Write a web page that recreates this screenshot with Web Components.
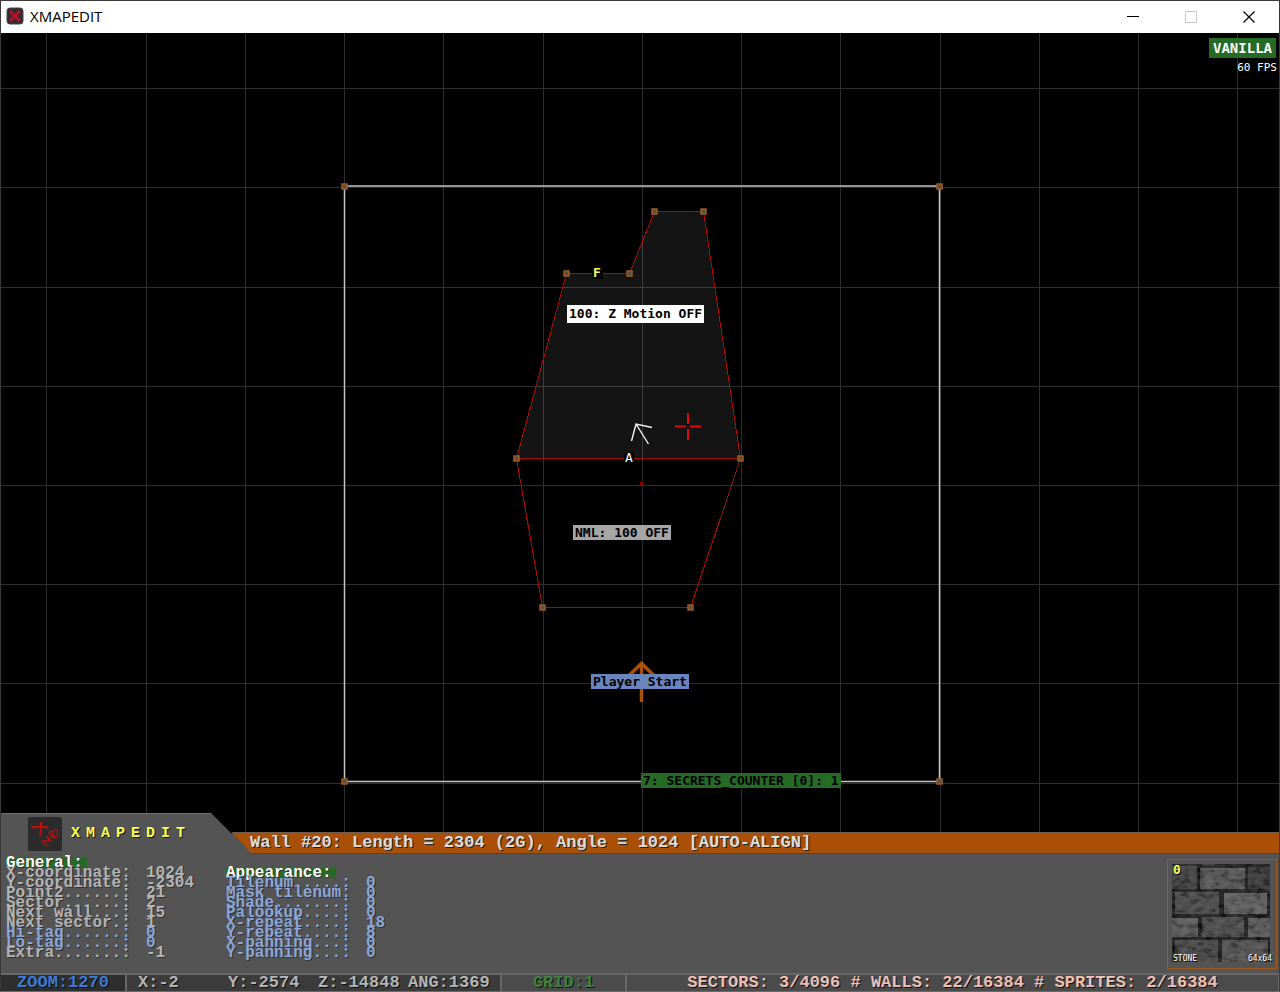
<!DOCTYPE html>
<html lang="en">
<head>
<meta charset="utf-8">
<title>XMAPEDIT</title>
<style>
html, body { margin: 0; height: 100%; background: #000; }
body { font-family: "Liberation Mono", monospace; font-size: 17px; color: #b4b4b4; }
</style>
</head>
<body>
<editor-window>
  <title-bar slot="title">XMAPEDIT</title-bar>
  <map-view slot="map">
    <map-label style="--x:567;--y:305;--bg:#fff;--h:18px">100: Z Motion OFF</map-label>
    <map-label style="--x:573;--y:525;--bg:#a6a6a6">NML: 100 OFF</map-label>
    <map-label style="--x:591;--y:674;--bg:#6a84bc">Player Start</map-label>
    <map-label style="--x:641;--y:773;--bg:#256a25">7: SECRETS_COUNTER [0]: 1</map-label>
    <map-label style="--x:591;--y:265;--bg:transparent;--fg:#fcfc54">F</map-label>
    <map-label style="--x:623;--y:450;--bg:transparent;--fg:#fff;--weight:400">A</map-label>
    <map-status slot="status" fps="60 FPS">VANILLA</map-status>
  </map-view>
  <panel-header slot="header" message="Wall #20: Length = 2304 (2G), Angle = 1024 [AUTO-ALIGN]">XMAPEDIT</panel-header>
  <property-panel slot="panel"></property-panel>
  <status-bar slot="footer">
    <status-cell tone="zoom">ZOOM:1270</status-cell>
    <status-cell tone="position"><span>X:-2</span><span>Y:-2574</span><span>Z:-14848</span><span>ANG:1369</span></status-cell>
    <status-cell tone="grid">GRID:1</status-cell>
    <status-cell tone="totals">SECTORS: 3/4096 # WALLS: 22/16384 # SPRITES: 2/16384</status-cell>
  </status-bar>
</editor-window>

<script>
const define = (name, html, setup) => {
  const template = document.createElement('template');
  template.innerHTML = html;
  customElements.define(name, class extends HTMLElement {
    constructor() {
      super();
      this.attachShadow({ mode: 'open' }).append(template.content.cloneNode(true));
    }
    connectedCallback() { if (setup) setup(this, this.shadowRoot); }
  });
};

define('editor-window', `
<style>
:host { display: flex; flex-direction: column; box-sizing: border-box; min-height: 100vh; border: 1px solid #3c3838; border-bottom-color: #6a6a6a; background: #545454; }
main { display: grid; flex: 1; min-height: 400px; }
</style>
<slot name="title"></slot>
<main><slot name="map"></slot></main>
<slot name="header"></slot>
<slot name="panel"></slot>
<slot name="footer"></slot>`);

define('title-bar', `
<style>
:host { display: flex; align-items: center; height: 32px; background: #fff; color: #000; font: 15px/20px "Open Sans", "Noto Sans", sans-serif; }
.icon { width: 18px; height: 18px; margin: 0 6px 2px 5px; }
h1 { flex: 1; margin: 0; padding-bottom: 2px; font: inherit; }
button { display: grid; place-items: center; width: 58px; height: 32px; border: 0; padding: 0; background: none; color: #000; }
button:last-child { margin-right: 1px; }
button:disabled { color: #c6c6c6; }
svg { fill: none; stroke: currentColor; }
</style>
<svg class="icon" viewBox="0 0 18 18"><rect x="1" y="1" width="16" height="16" rx="3" fill="#332c2f" stroke="#44444a"/><path d="M4 4l10 10M14 4L4 14" stroke="#b80f2b" stroke-width="3"/></svg>
<h1><slot></slot></h1>
<button aria-label="Minimize"><svg width="12" height="12"><path d="M0 5.5h12"/></svg></button>
<button aria-label="Maximize" disabled><svg width="12" height="12"><path d="M.5 .5h11v11h-11z"/></svg></button>
<button aria-label="Close"><svg width="12" height="12"><path d="M.5 .5l11 11M11.500 .5l-11 11" stroke-width="1.200"/></svg></button>`);

define('map-view', `
<style>
:host { display: block; position: relative; overflow: hidden; background: #000; }
svg { position: absolute; inset: 0; width: 100%; height: 100%; }
.status { position: absolute; top: 5px; right: 2px; }
</style>
<svg aria-hidden="true" fill="none">
  <g transform="translate(-1 -33)">
    <path id="grid" stroke="#2e2e2e"/>
    <path d="M567 273.500L629 273.500L654 211.500H703L740.500 458.500H516.500Z" fill="#fff" fill-opacity=".08"/>
    <path d="M344.500 186H939.500V781.500H344.500Z" stroke="#c4c4c4" stroke-width="1.500"/>
    <path d="M566.500 273.500H629.500L654.500 211.500H703.500L740.500 458.500L690.500 607.500H542.500L516.500 458.500L566.500 273.500M516.500 458.500H740.500" stroke="#a80a0a" stroke-width="1" shape-rendering="crispEdges"/>
    <g id="nodes" fill="#54504a" stroke="#a05a1c" stroke-width="1.500"></g>
    <path d="M592 266h11v13h-11zM624 452h10v12h-10z" fill="#000"/>
    <path d="M631.500 441L636 424L652 427.500M636 424L648.500 444" stroke="#f4f4f4" stroke-width="1.400"/>
    <path d="M675 426.500h11M690 426.500h11M688 413v11M688 429v11" stroke="#dc0808" stroke-width="2"/>
    <path d="M640 482l3 3M643 482l-3 3" stroke="#900"/>
    <path d="M641.500 702V664M629 675.500L641.500 663.500L654 675.500" stroke="#a85006" stroke-width="3.500"/>
  </g>
</svg>
<slot></slot>
<div class="status"><slot name="status"></slot></div>`, (host, root) => {
  let d = '';
  for (let i = 0; i < 40; i++) {
    d += `M${Math.round(46.4 + i * 99.25) + .5} 0V4000M0 ${Math.round(88.2 + i * 99.2) + .5}H4000`;
  }
  root.querySelector('#grid').setAttribute('d', d);
  const points = [[344, 186], [939, 186], [344, 781], [939, 781], [654, 211], [703, 211], [566, 273], [629, 273], [516, 458], [740, 458], [542, 607], [690, 607]];
  root.querySelector('#nodes').innerHTML = points.map(([x, y]) => `<rect x="${x - 2}" y="${y - 2}" width="5" height="5"/>`).join('');
});

define('map-label', `
<style>
:host { position: absolute; left: calc(var(--x) * 1px - 1px); top: calc(var(--y) * 1px - 33px); padding: 0 2px; background: var(--bg); color: var(--fg, #000); font: var(--weight, 700) 13px/15px "DejaVu Sans Mono", monospace; line-height: var(--h, 15px); white-space: nowrap; }
</style>
<slot></slot>`);

define('map-status', `
<style>
:host { display: flex; flex-direction: column; align-items: flex-end; gap: 2px; color: #fff; font-family: "DejaVu Sans Mono", monospace; }
b { padding: 0 4px; margin-right: 1px; background: #256a25; font-size: 14px; line-height: 20px; }
span { font-size: 11px; line-height: 16px; }
</style>
<b><slot></slot></b><span></span>`, (host, root) => {
  root.querySelector('span').textContent = host.getAttribute('fps');
});

define('panel-header', `
<style>
:host { display: flex; align-items: flex-end; position: relative; margin-top: -20px; }
.tab { flex: none; display: flex; align-items: center; box-sizing: border-box; width: 251px; height: 41px; padding: 1px 0 0 27px; gap: 9px;
  background: linear-gradient(#707070 1px, #545454 1px); clip-path: polygon(0 0, 210px 0, 100% 100%, 0 100%); }
.tab svg { width: 34px; height: 34px; }
h2 { margin: 0; color: #fcfc54; font-size: 15px; line-height: 20px; letter-spacing: 6px; text-shadow: 1px 1px #111; }
p { flex: 1; margin: 0 0 0 -20px; padding-left: 18px; line-height: 20px; border-top: 1px solid #705c4c; border-bottom: 1px solid #4a4642; background: #a94f06; color: #dcdcdc; font-weight: 700; text-shadow: 1px 1px #222; white-space: nowrap; overflow: hidden;
  clip-path: polygon(0 0, 100% 0, 100% 100%, 20px 100%); }
</style>
<div class="tab">
  <svg viewBox="0 0 34 34" fill="none" stroke="#c00c0c"><rect width="34" height="34" rx="2" fill="#2b2b2b" stroke="none"/>
    <path d="M4 10.500l9-1 7 1M13 5v7l-1 7" stroke-width="2"/>
    <path d="M3 8l3 3M18 9l2 3M11 5l4 1" stroke-width="1.200"/>
    <path d="M14 24l5 5M14 24l7 0M21 24l-2-5M19 19l5 6M21 16l5 6M21 16c2-4 6-1 3 3M26 13c4-2 5 3 2 7c-3 0-4-4-2-7" stroke-width="1.300"/>
  </svg>
  <h2><slot></slot></h2>
</div>
<p></p>`, (host, root) => {
  root.querySelector('p').textContent = host.getAttribute('message');
});

define('property-list', `
<style>
:host { display: block; width: 220px; }
table { border-spacing: 0; font-size: 16px; font-weight: 700; line-height: 10px; text-shadow: 1px 1px #333; }
caption { text-align: left; height: 10px; color: #fff; }
mark { display: inline-block; height: 10px; padding-right: 4px; background: #256a25; color: inherit; }
th, td { padding: 0; height: 10px; text-align: left; font-weight: inherit; white-space: nowrap; }
th { width: 140px; }
.editable { color: #8ca6d8; }
</style>
<table><caption><mark></mark></caption><tbody></tbody></table>`, (host, root) => {
  root.querySelector('mark').textContent = host.getAttribute('heading');
  root.querySelector('tbody').innerHTML = host.rows.map(([label, value, editable]) =>
    `<tr${editable ? ' class="editable"' : ''}><th scope="row">${label}</th><td>${value}</td></tr>`).join('');
});

define('tile-preview', `
<style>
:host { display: grid; box-sizing: border-box; width: 110px; height: 110px; padding: 4px; border: 1px solid #a0561c; color: #fff; font: 8px/10px "DejaVu Sans Mono", monospace; text-shadow: 1px 1px #000; }
svg, .text { grid-area: 1 / 1; }
svg { width: 98px; height: 98px; }
.text { display: grid; grid-template: 1fr auto / 1fr auto; z-index: 1; align-items: start; padding-left: 1px; }
b { grid-column: 1 / 3; color: #fcfc54; font-size: 13px; line-height: 12px; }
</style>
<svg viewBox="0 0 98 98" aria-hidden="true">
  <filter id="grain" x="0" y="0" width="100%" height="100%">
    <feTurbulence type="fractalNoise" baseFrequency=".12 .2" numOctaves="4" seed="6"/>
    <feColorMatrix values="1 0 0 0 -.3  1 0 0 0 -.3  1 0 0 0 -.3  0 0 0 0 .2"/>
  </filter>
  <rect width="98" height="98" fill="#141414"/>
  <g>
    <path d="M0 2h25v23H0z" fill="#383838"/><path d="M28 4h45v21H28z" fill="#505050"/><path d="M76 3h22v22H76z" fill="#303030"/>
    <path d="M3 28h44v22H3z" fill="#444"/><path d="M52 29h43v21H52z" fill="#5a5a5a"/>
    <path d="M0 54h26v19H0z" fill="#545454"/><path d="M30 53h42v20H30z" fill="#444"/><path d="M76 54h22v19H76z" fill="#545454"/>
    <path d="M3 76h43v22H3z" fill="#404040"/><path d="M50 76h46v22H50z" fill="#4c4c4c"/>
    <path d="M52 30h43M28 5h45M0 55h26M30 0h12" stroke="#626262"/>
  </g>
  <rect width="98" height="98" filter="url(#grain)"/>
</svg>
<div class="text"><b>0</b><span>STONE</span><span>64x64</span></div>`);

define('property-panel', `
<style>
:host { display: flex; justify-content: space-between; min-height: 115px; padding: 4px 2px 0 5px; background: #545454; }
.lists { display: flex; }
.second { margin-top: 10px; }
tile-preview { margin-top: 1px; }
</style>
<div class="lists"></div>
<tile-preview></tile-preview>`, (host, root) => {
  const lists = root.querySelector('.lists');
  if (lists.children.length) return;
  const add = (heading, rows, cls) => {
    const list = document.createElement('property-list');
    list.setAttribute('heading', heading);
    list.rows = rows;
    if (cls) list.className = cls;
    lists.append(list);
  };
  add('General:', [
    ['X-coordinate:', '1024'], ['Y-coordinate:', '-2304'], ['Point2......:', '21'], ['Sector......:', '2'],
    ['Next wall...:', '15'], ['Next sector.:', '1'], ['Hi-tag......:', '0', true], ['Lo-tag......:', '0', true], ['Extra.......:', '-1']
  ]);
  add('Appearance:', [
    ['Tilenum.....:', '0', true], ['Mask tilenum:', '0', true], ['Shade.......:', '0', true], ['Palookup....:', '0', true],
    ['X-repeat....:', '18', true], ['Y-repeat....:', '8', true], ['X-panning...:', '0', true], ['Y-panning...:', '0', true]
  ], 'second');
});

define('status-bar', `
<style>
:host { display: grid; grid-template-columns: 126px 375px 125px 1fr; border-top: 2px solid #686868; line-height: 16px; font-weight: 700; text-shadow: 1px 1px #111; }
</style>
<slot></slot>`);

define('status-cell', `
<style>
:host { display: flex; justify-content: center; border-right: 2px solid #686868; background: #4b4b4b; white-space: nowrap; }
:host([tone="zoom"]) { background: #2e2e2e; color: #3b7bd8; }
:host([tone="position"]) { display: grid; grid-template-columns: repeat(4, 90px); justify-content: end; padding-right: 2px; background: #3b3b3b; }
:host([tone="grid"]) { color: #3f8040; }
:host([tone="totals"]) { border-right-width: 1px; color: #ecc0b4; }
</style>
<slot></slot>`);
</script>
</body>
</html>
